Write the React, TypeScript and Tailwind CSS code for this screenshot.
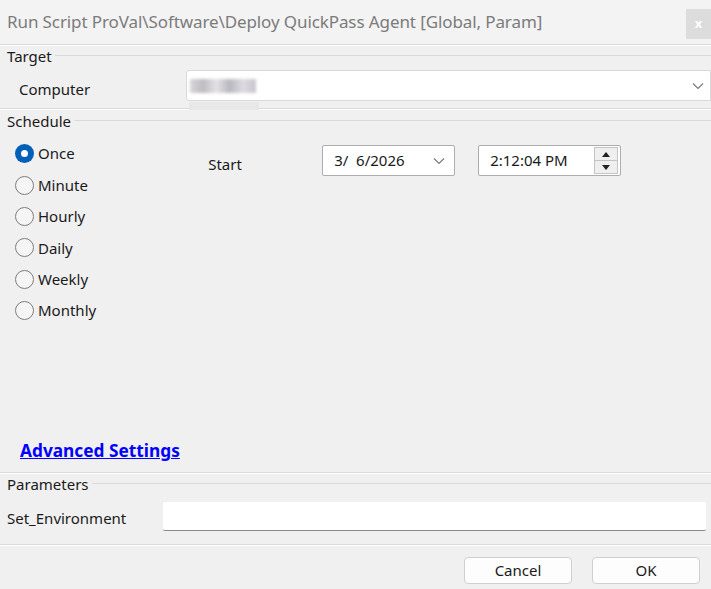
import React from "react";

const font = { fontFamily: '"Noto Sans", "Open Sans", sans-serif' };

function Chevron({ className }: { className?: string }) {
  return (
    <svg width="12" height="8" viewBox="0 0 12 8" className={className}>
      <path d="M1 1.5 L6 6.5 L11 1.5" fill="none" stroke="#7a7a7a" strokeWidth="1.2" />
    </svg>
  );
}

function Radio({ label, checked }: { label: string; checked?: boolean }) {
  return (
    <div className="flex items-center h-[31.4px]">
      {checked ? (
        <div className="w-[19px] h-[19px] rounded-full bg-[#005fb8] flex items-center justify-center">
          <div className="w-[7px] h-[7px] rounded-full bg-white" />
        </div>
      ) : (
        <div className="w-[19px] h-[19px] rounded-full border-[1.5px] border-[#7d7d7d] bg-[#f5f5f5]" />
      )}
      <span className="ml-[4px] text-[15px] text-[#1a1a1a]">{label}</span>
    </div>
  );
}

function GroupHeader({ label }: { label: string }) {
  return (
    <div className="flex items-center h-[20px] pl-[7px]">
      <span className="text-[15px] text-[#1a1a1a] leading-none">{label}</span>
      <div className="flex-1 ml-[3px] h-[2px] border-t border-[#dadada] border-b-white" />
    </div>
  );
}

function Separator() {
  return <div className="h-[2px] border-t border-[#dadada] border-b border-b-white" />;
}

export default function App() {
  return (
    <div className="w-[711px] h-[589px] bg-[#f0f0f0] overflow-hidden flex flex-col" style={font}>
      {/* Title bar */}
      <div className="h-[44px] bg-[#f3f3f3] flex items-center relative">
        <span className="pl-[7px] text-[17px] text-[#7b7b7b] tracking-[-0.1px]">
          Run Script ProVal\Software\Deploy QuickPass Agent [Global, Param]
        </span>
        <div className="absolute right-0 top-[9px] w-[25px] h-[30px] bg-[#dcdcdc] flex items-center justify-center text-white text-[13px] font-bold">
          x
        </div>
      </div>
      <Separator />
      {/* Target */}
      <div>
        <GroupHeader label="Target" />
      </div>
      <div className="flex items-center h-[31px] mt-[4px]">
        <span className="w-[186px] pl-[19px] pt-[7px] text-[15px] text-[#1a1a1a]">Computer</span>
        <div className="flex-1 h-[31px] bg-white border border-[#d9d9d9] rounded-l-[3px] flex items-center relative">
          <div className="ml-[3px] w-[66px] h-[14px] bg-[linear-gradient(90deg,#c8c4cc,#a39fa8,#d8d6dc,#9c99a5,#cfcbd4,#b0adb8)] opacity-70 blur-[1.5px]" />
          <div className="absolute left-[2px] top-[31px] w-[70px] h-[8px] bg-[#e8e8e8]" />
          <div className="flex-1" />
          <Chevron className="mr-[6px]" />
        </div>
      </div>
      <div className="mt-[7px]">
        <Separator />
      </div>
      {/* Schedule */}
      <div className="mt-[1px]">
        <GroupHeader label="Schedule" />
      </div>
      <div className="flex h-[341px] relative">
        <div className="flex flex-col pl-[15px] pt-[7px]">
          <Radio label="Once" checked />
          <Radio label="Minute" />
          <Radio label="Hourly" />
          <Radio label="Daily" />
          <Radio label="Weekly" />
          <Radio label="Monthly" />
        </div>
        <div className="flex items-start ml-[112px] pt-[14px]">
          <span className="text-[15px] text-[#1a1a1a] pt-[8px] w-[114px]">Start</span>
          <div className="w-[133px] h-[31px] bg-white border border-[#adadad] rounded-[2px] flex items-center">
            <span className="pl-[11px] text-[15px] text-[#1a1a1a] whitespace-pre">3/  6/2026</span>
            <div className="flex-1" />
            <Chevron className="mr-[9px]" />
          </div>
          <div className="ml-[23px] w-[143px] h-[31px] bg-white border border-[#adadad] rounded-[2px] flex items-center">
            <span className="pl-[11px] text-[15px] text-[#1a1a1a]">2:12:04 PM</span>
            <div className="flex-1" />
            <div className="mr-[2px] w-[24px] h-[27px] flex flex-col border border-[#c4c4c4] bg-[#efefef]">
              <div className="flex-1 flex items-center justify-center border-b border-[#c4c4c4]">
                <svg width="8" height="5" viewBox="0 0 8 5"><path d="M0 5 L4 0 L8 5 Z" fill="#222" /></svg>
              </div>
              <div className="flex-1 flex items-center justify-center">
                <svg width="8" height="5" viewBox="0 0 8 5"><path d="M0 0 L4 5 L8 0 Z" fill="#222" /></svg>
              </div>
            </div>
          </div>
        </div>
        <a className="absolute left-[20px] bottom-[8px] text-[17.3px] font-bold text-[#0000ff] underline">
          Advanced Settings
        </a>
      </div>
      <Separator />
      {/* Parameters */}
      <div>
        <GroupHeader label="Parameters" />
      </div>
      <div className="flex items-center mt-[8px] h-[29px]">
        <span className="w-[163px] pl-[7px] pt-[3px] text-[15px] text-[#1a1a1a]">Set_Environment</span>
        <div className="w-[543px] h-[29px] bg-white border-b border-[#8a8a8a] rounded-[2px]" />
      </div>
      <div className="mt-[13px]">
        <Separator />
      </div>
      <div className="flex justify-end mt-[11px] pr-[11px] gap-[20px]">
        <button className="w-[108px] h-[27px] bg-[#fdfdfd] border border-[#d0d0d0] rounded-[4px] text-[15px] text-[#1a1a1a]">
          Cancel
        </button>
        <button className="w-[108px] h-[27px] bg-[#fdfdfd] border border-[#d0d0d0] rounded-[4px] text-[15px] text-[#1a1a1a]">
          OK
        </button>
      </div>
    </div>
  );
}
